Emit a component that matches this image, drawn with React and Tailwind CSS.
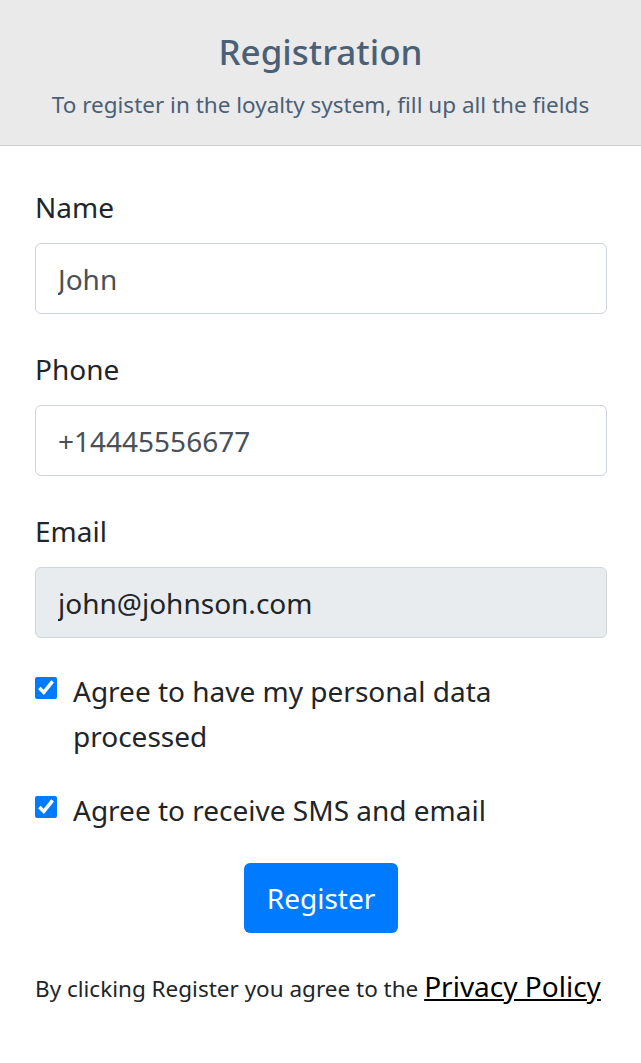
import React from "react";

const font = { fontFamily: '"Noto Sans", "Open Sans", sans-serif' };

function Field({ label, value, disabled }) {
  return (
    <div className="flex flex-col">
      <label className="text-[28px] leading-[42px] text-[#212529]">{label}</label>
      <input
        type="text"
        defaultValue={value}
        disabled={disabled}
        className={`mt-[15px] h-[71px] w-full rounded-[6px] border border-[#ced4da] px-[22px] text-[28px] outline-none ${
          disabled ? "bg-[#e9ecef] text-[#212529]" : "bg-white text-[#495057]"
        }`}
      />
    </div>
  );
}

function Check({ children }) {
  return (
    <label className="flex items-start gap-[16px]">
      <input
        type="checkbox"
        defaultChecked
        className="mt-[8px] h-[22px] w-[22px] shrink-0 accent-[#007bff]"
      />
      <span className="text-[28px] leading-[45px] text-[#212529]">{children}</span>
    </label>
  );
}

export default function App() {
  return (
    <div style={font} className="min-h-screen bg-white">
      {/* header */}
      <div className="flex h-[146px] flex-col items-center border-b border-[#cfcfcf] bg-[#eaeaea] pt-[28px] text-[#4a6076]">
        <h1 className="text-[35px] font-medium leading-[48px]">Registration</h1>
        <p className="mt-[13px] text-[22.5px] leading-[32px]">
          To register in the loyalty system, fill up all the fields
        </p>
      </div>

      <form className="flex flex-col pl-[35px] pr-[34px] pt-[40px]">
        <div className="flex flex-col gap-[34px]">
          <Field label="Name" value="John" />
          <Field label="Phone" value="+14445556677" />
          <Field label="Email" value="john@johnson.com" disabled />
        </div>

        <div className="mt-[31px] flex flex-col gap-[29px]">
          <Check>Agree to have my personal data processed</Check>
          <Check>Agree to receive SMS and email</Check>
        </div>

        <div className="mt-[30px] flex justify-center">
          <button
            type="button"
            className="h-[70px] w-[154px] rounded-[6px] bg-[#007bff] text-[28px] text-white"
          >
            Register
          </button>
        </div>

        <p className="mt-[33px] text-[22.5px] leading-[40px] text-[#212529]">
          By clicking Register you agree to the{" "}
          <a href="#" className="text-[28px] text-black underline">
            Privacy Policy
          </a>
        </p>
      </form>
    </div>
  );
}
